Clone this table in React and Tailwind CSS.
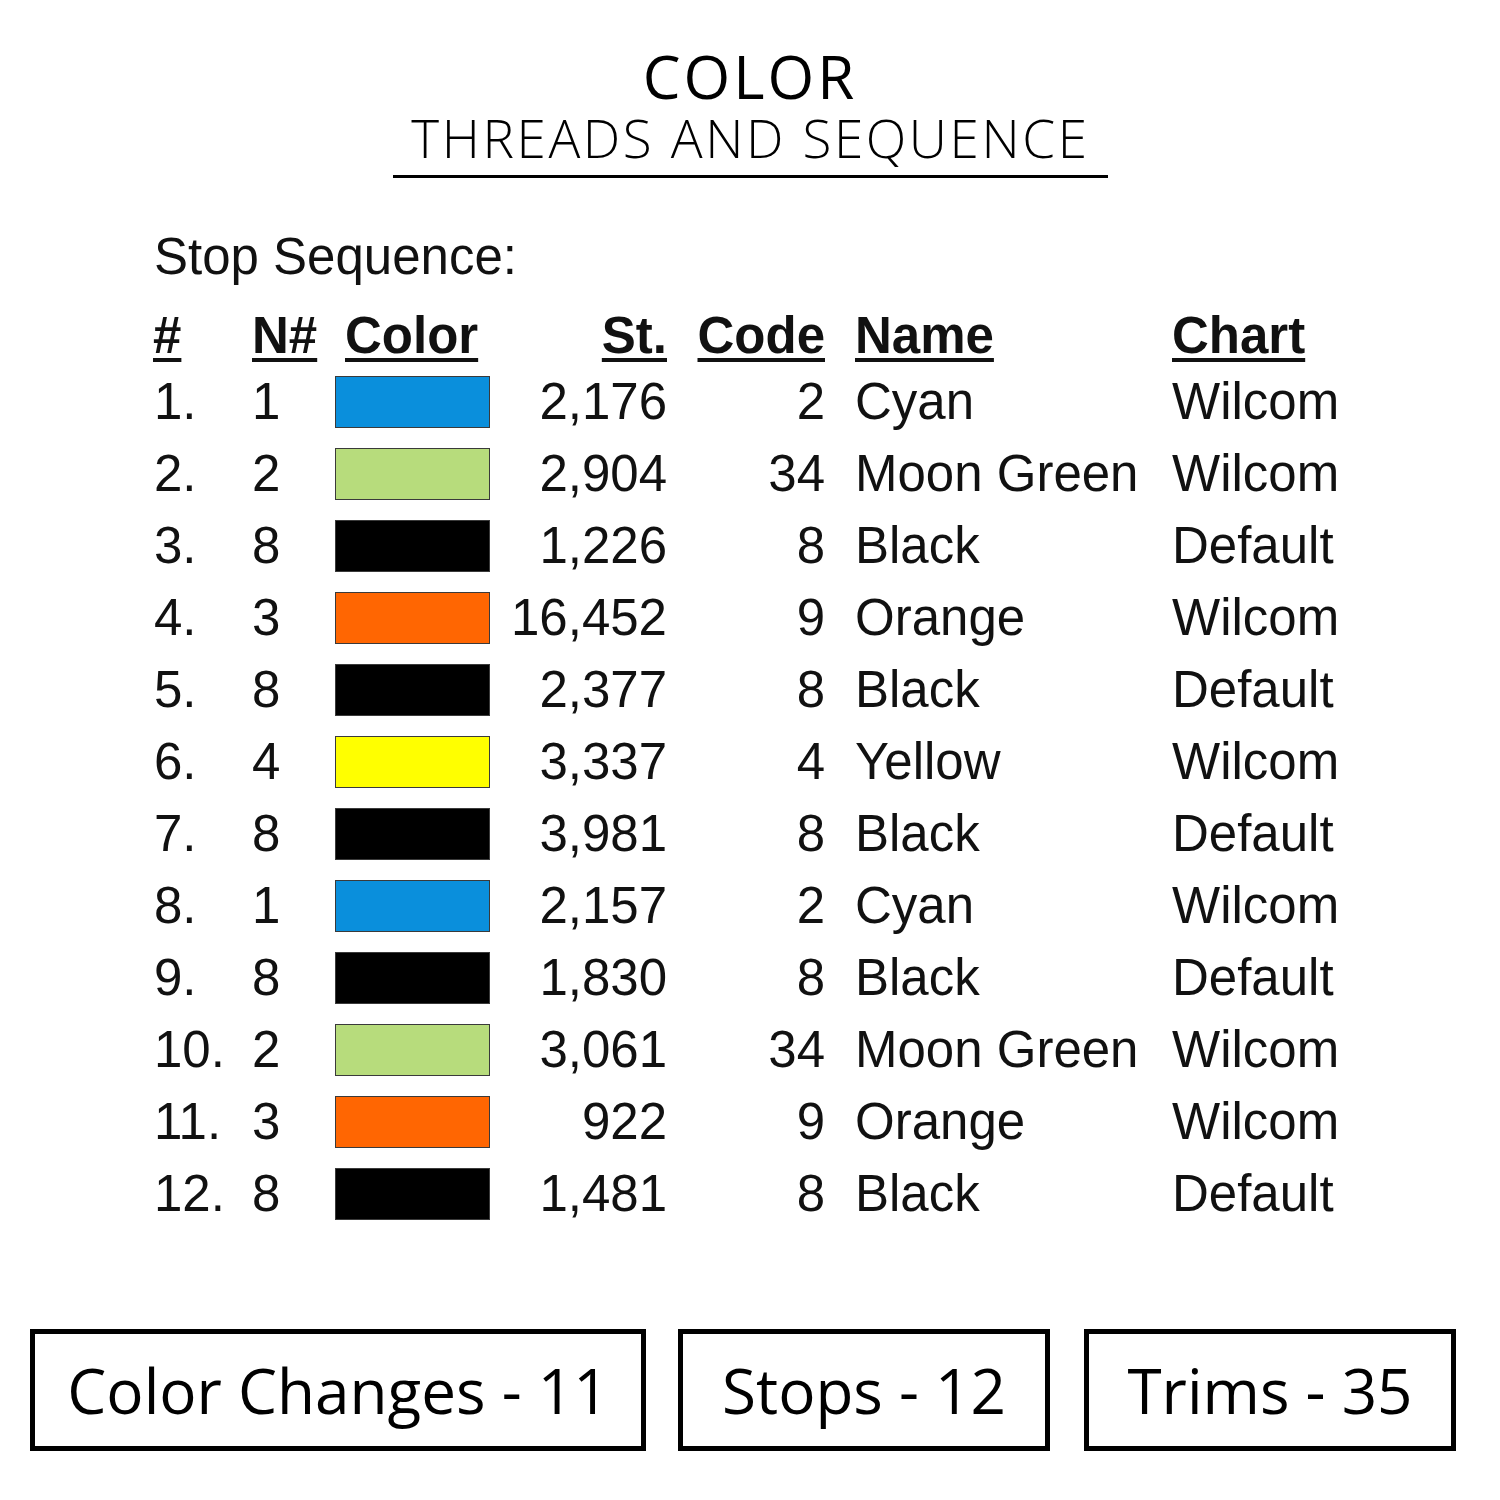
import React from 'react';

const ROWS = [
  ['1.', '1', 'bg-[#0a8fdc]', '2,176', '2', 'Cyan', 'Wilcom'],
  ['2.', '2', 'bg-[#b7dc7c]', '2,904', '34', 'Moon Green', 'Wilcom'],
  ['3.', '8', 'bg-black', '1,226', '8', 'Black', 'Default'],
  ['4.', '3', 'bg-[#ff6602]', '16,452', '9', 'Orange', 'Wilcom'],
  ['5.', '8', 'bg-black', '2,377', '8', 'Black', 'Default'],
  ['6.', '4', 'bg-[#ffff00]', '3,337', '4', 'Yellow', 'Wilcom'],
  ['7.', '8', 'bg-black', '3,981', '8', 'Black', 'Default'],
  ['8.', '1', 'bg-[#0a8fdc]', '2,157', '2', 'Cyan', 'Wilcom'],
  ['9.', '8', 'bg-black', '1,830', '8', 'Black', 'Default'],
  ['10.', '2', 'bg-[#b7dc7c]', '3,061', '34', 'Moon Green', 'Wilcom'],
  ['11.', '3', 'bg-[#ff6602]', '922', '9', 'Orange', 'Wilcom'],
  ['12.', '8', 'bg-black', '1,481', '8', 'Black', 'Default'],
];

const head = 'underline decoration-[4px] underline-offset-[5px]';

function StatBox({ children, width }) {
  return (
    <div className={`${width} h-[122px] border-[5px] border-black flex items-center justify-center`}>
      <span className="font-['Open_Sans',sans-serif] text-[62px] leading-none text-black">{children}</span>
    </div>
  );
}

export default function App() {
  return (
    <div className="w-[1500px] h-[1500px] bg-white flex flex-col text-black">
      {/* Title */}
      <div className="pt-[48px] flex flex-col items-center font-['Open_Sans',sans-serif]">
        <div className="h-[56px] text-[60px] leading-[56px] font-medium tracking-[3px]">COLOR</div>
        <div className="w-[715px] ml-[1px] border-b-[3px] border-black pt-[6px] pb-[9px] text-center">
          <div className="h-[56px] text-[53px] leading-[56px] font-light tracking-[2.6px]">THREADS AND SEQUENCE</div>
        </div>
      </div>

      {/* Table */}
      <div className="pl-[153px] font-['Liberation_Sans',Arial,sans-serif] text-[51px] text-[#111]">
        <div className="mt-[49px] h-[60px] leading-[60px] pl-[1px]">Stop Sequence:</div>

        <div className="mt-[19px] h-[60px] leading-[60px] flex font-bold">
          <div className="w-[99px]"><span className={head}>#</span></div>
          <div className="w-[83px]"><span className={head}>N#</span></div>
          <div className="w-[155px] pl-[10px]"><span className={head}>Color</span></div>
          <div className="w-[177px] text-right"><span className={head}>St.</span></div>
          <div className="w-[158px] text-right"><span className={head}>Code</span></div>
          <div className="w-[347px] pl-[30px]"><span className={head}>Name</span></div>
          <div><span className={head}>Chart</span></div>
        </div>

        {ROWS.map((r, i) => (
          <div key={i} className="h-[72px] leading-[72px] flex items-center">
            <div className="w-[99px] pl-[1px]">{r[0]}</div>
            <div className="w-[83px]">{r[1]}</div>
            <div className="w-[155px] flex items-center">
              <div className={`w-[155px] h-[52px] border border-[#3a3a3a] ${r[2]}`} />
            </div>
            <div className="w-[177px] text-right">{r[3]}</div>
            <div className="w-[158px] text-right">{r[4]}</div>
            <div className="w-[347px] pl-[30px]">{r[5]}</div>
            <div>{r[6]}</div>
          </div>
        ))}
      </div>

      {/* Summary boxes */}
      <div className="mt-[99px] pl-[30px] flex gap-[32px]">
        <StatBox width="w-[616px]">Color Changes - 11</StatBox>
        <StatBox width="w-[372px]">Stops - 12</StatBox>
        <div className="ml-[2px]">
          <StatBox width="w-[372px]">Trims - 35</StatBox>
        </div>
      </div>
    </div>
  );
}
